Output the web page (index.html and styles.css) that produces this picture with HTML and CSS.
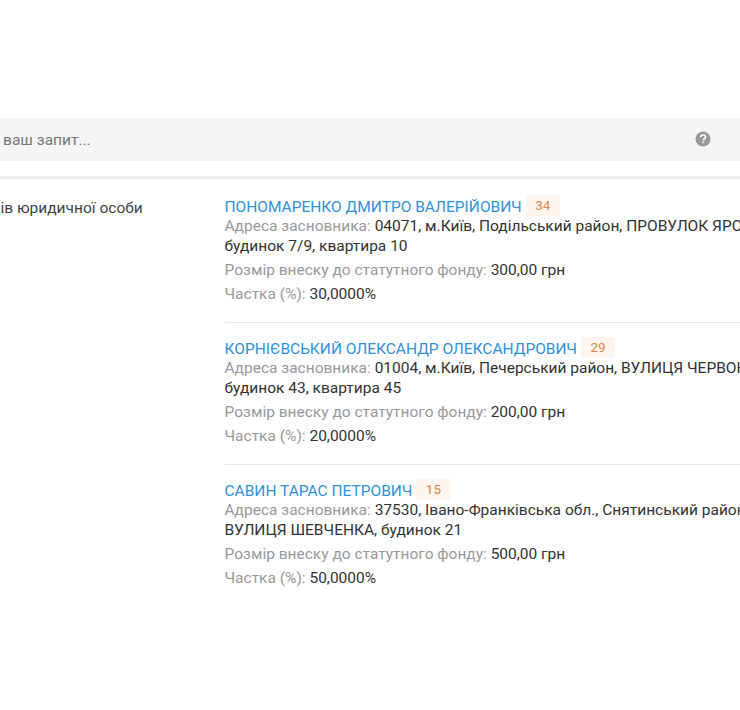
FILE: index.html
```html
<!DOCTYPE html>
<html lang="uk">
<head>
<meta charset="utf-8">
<title>Засновники</title>
<link rel="stylesheet" href="styles.css">
</head>
<body>
<div class="page">
  <div class="search">
    <span class="search-text">Введіть ваш запит...</span>
    <svg class="help" width="16" height="16" viewBox="0 0 16 16"><circle cx="8" cy="8" r="7.5" fill="#999"/><path d="M5.6 6.2C5.7 4.8 6.7 4 8.1 4c1.4 0 2.4.8 2.4 2 0 1-.6 1.5-1.3 2-.6.4-.8.7-.8 1.3" fill="none" stroke="#fff" stroke-width="1.7"/><rect x="7.4" y="10.4" width="1.8" height="1.8" fill="#fff"/></svg>
  </div>
  <div class="rule"></div>
  <div class="section">
    <div class="label">Перелік засновників юридичної особи</div>
    <div class="list">
      <div class="item">
        <div class="name"><a class="link">ПОНОМАРЕНКО ДМИТРО ВАЛЕРІЙОВИЧ</a><span class="badge">34</span></div>
        <div class="address"><span class="key">Адреса засновника:</span> 04071, м.Київ, Подільський район, ПРОВУЛОК ЯРОСЛАВСЬКИЙ,<br>будинок 7/9, квартира 10</div>
        <div class="line"><span class="key">Розмір внеску до статутного фонду:</span> 300,00 грн</div>
        <div class="line"><span class="key">Частка (%):</span> 30,0000%</div>
      </div>
      <div class="item">
        <div class="name"><a class="link">КОРНІЄВСЬКИЙ ОЛЕКСАНДР ОЛЕКСАНДРОВИЧ</a><span class="badge">29</span></div>
        <div class="address"><span class="key">Адреса засновника:</span> 01004, м.Київ, Печерський район, ВУЛИЦЯ ЧЕРВОНОАРМІЙСЬКА,<br>будинок 43, квартира 45</div>
        <div class="line"><span class="key">Розмір внеску до статутного фонду:</span> 200,00 грн</div>
        <div class="line"><span class="key">Частка (%):</span> 20,0000%</div>
      </div>
      <div class="item">
        <div class="name"><a class="link">САВИН ТАРАС ПЕТРОВИЧ</a><span class="badge">15</span></div>
        <div class="address"><span class="key">Адреса засновника:</span> 37530, Івано-Франківська обл., Снятинський район, село Стецева,<br>ВУЛИЦЯ ШЕВЧЕНКА, будинок 21</div>
        <div class="line"><span class="key">Розмір внеску до статутного фонду:</span> 500,00 грн</div>
        <div class="line"><span class="key">Частка (%):</span> 50,0000%</div>
      </div>
    </div>
  </div>
</div>
</body>
</html>
```

FILE: styles.css
```css
html, body {
  margin: 0;
  height: 710px;
  overflow: hidden;
  background: #fff;
}
body {
  font-family: Roboto, "Liberation Sans", sans-serif;
  font-size: 15.5px;
  color: #333;
}
.page {
  width: 1100px;
  margin-left: -180px;
  padding-top: 118px;
}
.search {
  height: 43px;
  background: #f5f5f5;
  display: flex;
  align-items: center;
  box-sizing: border-box;
  padding-left: 123.5px;
  position: relative;
  color: #777;
}
.help {
  position: absolute;
  left: 875px;
  top: 13px;
}
.rule {
  height: 3px;
  background: #eee;
  margin-top: 15px;
}
.section {
  display: flex;
  padding-top: 17px;
}
.label {
  width: 404.5px;
  flex: none;
  box-sizing: border-box;
  padding-left: 42px;
  padding-top: 2px;
  line-height: 20px;
  color: #444;
}
.list {
  flex: 1;
  white-space: nowrap;
}
.item {
  box-sizing: border-box;
  height: 127px;
  border-bottom: 1px solid #e8e8e8;
}
.item + .item {
  height: 142px;
  padding-top: 15px;
}
.item:last-child {
  border-bottom: none;
}
.name {
  line-height: 20px;
  height: 20px;
  display: flex;
  align-items: center;
}
.link {
  color: #3093da;
  margin-top: 2px;
}
.badge {
  margin-left: 4px;
  padding: 0 9.5px;
  height: 21px;
  line-height: 21px;
  font-size: 13.5px;
  color: #e0864c;
  background: #fdf5ee;
  border-radius: 2px;
  margin-top: -1px;
}
.address {
  line-height: 20px;
}
.line {
  line-height: 20px;
  margin-top: 4px;
}
.key {
  color: #999;
}
```
